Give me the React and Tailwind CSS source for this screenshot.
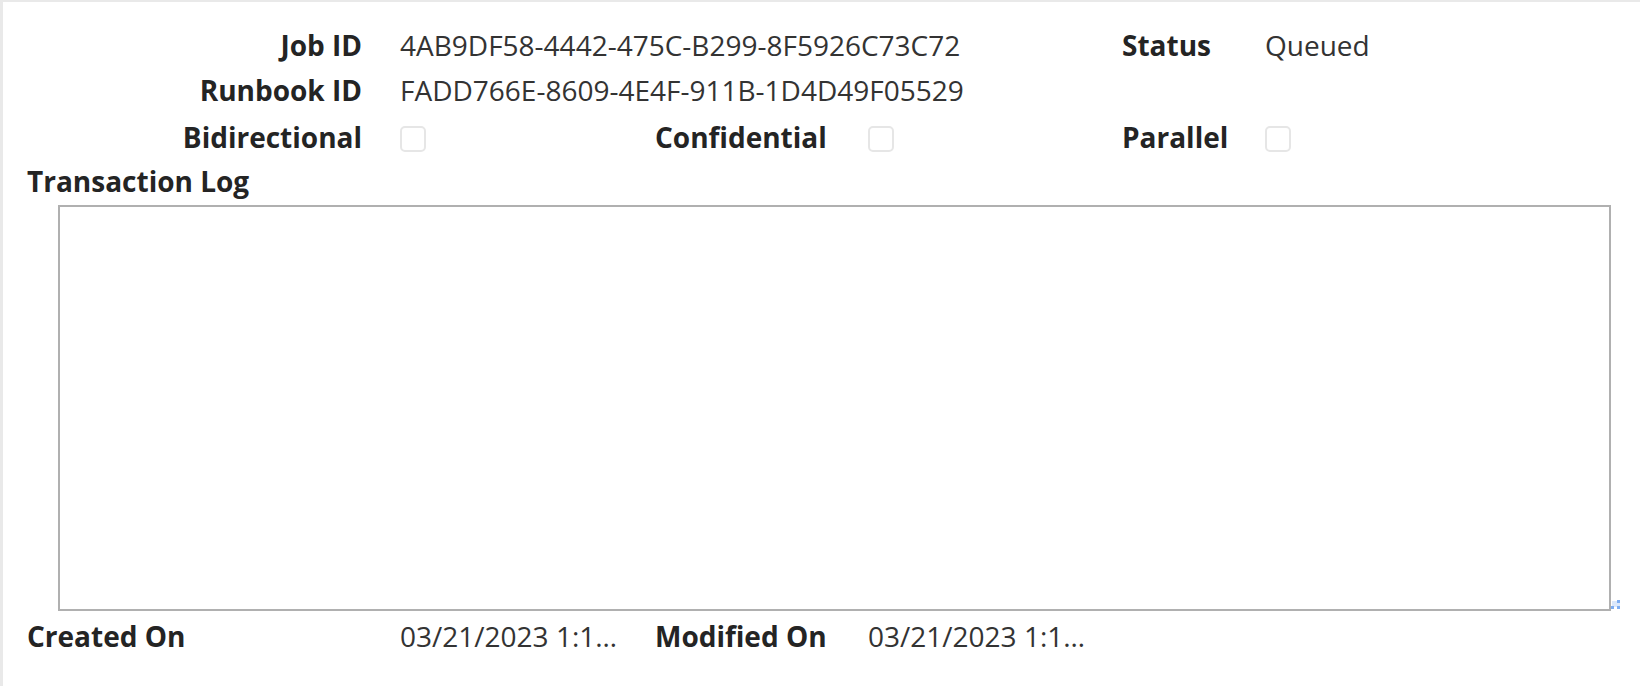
import React from "react";

// Job record form – read-only view
const job = {
  jobId: "4AB9DF58-4442-475C-B299-8F5926C73C72",
  runbookId: "FADD766E-8609-4E4F-911B-1D4D49F05529",
  status: "Queued",
  createdOn: "03/21/2023 1:1…",
  modifiedOn: "03/21/2023 1:1…",
};

function Label({ children, className = "" }) {
  return (
    <div className={"font-bold text-[#242424] whitespace-nowrap " + className}>
      {children}
    </div>
  );
}

function Value({ children, className = "" }) {
  return (
    <div className={"text-[#333333] whitespace-nowrap " + className}>{children}</div>
  );
}

function Checkbox() {
  return (
    <span className="block w-[26px] h-[26px] mt-[8px] border-2 border-[#e6e6e6] rounded-[5px] bg-white" />
  );
}

export default function App() {
  return (
    <div className="min-h-screen bg-white border-t-2 border-l-[3px] border-[#e9e9e9] font-['Open_Sans',sans-serif] text-[28px] leading-[38px] pl-[24px] pt-[24px]">
      {/* ids + status */}
      <div className="flex h-[45px]">
        <Label className="w-[335px] text-right">Job ID</Label>
        <Value className="ml-[38px] w-[722px]">{job.jobId}</Value>
        <Label className="w-[143px]">Status</Label>
        <Value>{job.status}</Value>
      </div>
      <div className="flex h-[47px]">
        <Label className="w-[335px] text-right">Runbook ID</Label>
        <Value className="ml-[38px]">{job.runbookId}</Value>
      </div>

      {/* flags */}
      <div className="flex h-[44px]">
        <Label className="w-[335px] text-right">Bidirectional</Label>
        <div className="ml-[38px] w-[255px]">
          <Checkbox />
        </div>
        <Label className="w-[213px]">Confidential</Label>
        <div className="w-[254px]">
          <Checkbox />
        </div>
        <Label className="w-[143px]">Parallel</Label>
        <div>
          <Checkbox />
        </div>
      </div>

      {/* log */}
      <Label className="h-[38px]">Transaction Log</Label>
      <div className="relative mt-[5px] ml-[31px] w-[1553px] h-[406px] border-2 border-[#b0b0b0] bg-white">
        <svg
          className="absolute right-[-13px] bottom-[-2px]"
          width="12"
          height="12"
          viewBox="0 0 12 12"
        >
          <rect x="2" y="2" width="8" height="6" fill="#dbe8fb" />
          <rect x="7" y="1" width="3" height="3" fill="#7eaef2" />
          <rect x="1" y="7" width="3" height="3" fill="#7eaef2" />
          <rect x="7" y="7" width="3" height="3" fill="#7eaef2" />
        </svg>
      </div>

      {/* audit */}
      <div className="flex h-[38px] mt-[6px]">
        <Label className="w-[373px]">Created On</Label>
        <Value className="w-[255px]">{job.createdOn}</Value>
        <Label className="w-[213px]">Modified On</Label>
        <Value>{job.modifiedOn}</Value>
      </div>
    </div>
  );
}
